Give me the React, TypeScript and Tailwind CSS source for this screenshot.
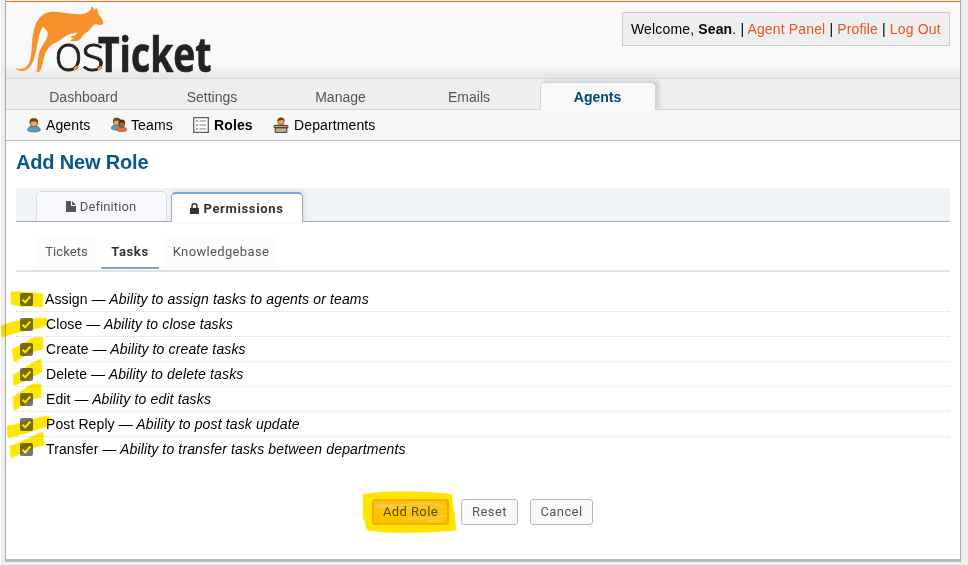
import React from "react";

function Logo() {
  return (
    <svg className="block h-[76px] w-[210px] overflow-visible" viewBox="8 2 210 76">
      <path
        fill="#f7902a"
        d="M15 68.300C20 70 26 69 29 63C33 54 30.500 43 34 30C36 20 42 13 50 12C57 11 62 13 70 13.500C77 14.500 84 15 88 12C90.500 10.500 91.500 9 91 6.500C93 7 94 8.500 94.500 10.500C95.500 9 95.300 7.500 96 7.500C97.700 9 97.500 12 98.500 14.500C101 17 103.500 20.500 103.300 23.500C102 26 98 24.500 95 24C91 27 90 31 83.500 34.500C82.500 37 80 40 77 41L71 41C70 39.500 72 39 74.500 38.500C70 38 70 36.500 72 36.300C76 36 76.500 33.500 77 32.500C71 33.500 67 35 65 36.500C59 42 52 43 48.500 48C43.500 54 44 60 41 69C39.500 72.500 38 73 36.700 72C38 63 37.500 57 40 50C42 45 49 38 47.500 32C46 29 44 28 43 26.500C38 33 38 45 35 55C33 65 28 71 21.500 71C18 70.500 16 69.500 15 68.300Z"
      />
      <g fill="#222" stroke="#222" className="font-['Lato',sans-serif] text-[53px] font-light">
        <text x="54.500" y="71.300" textLength="28" lengthAdjust="spacingAndGlyphs" strokeWidth=".8">o</text>
        <text x="81" y="71.300" textLength="24" lengthAdjust="spacingAndGlyphs" strokeWidth=".8">s</text>
      </g>
      <text x="98" y="71.700" textLength="113.500" lengthAdjust="spacingAndGlyphs" fill="#222" stroke="#222" strokeWidth=".7" className="font-['Open_Sans',sans-serif] text-[49px] font-bold">Ticket</text>
      <path d="M74 69.500L78 66.500M98 69.500L102 67" stroke="#f7902a" strokeWidth="3" />
    </svg>
  );
}

function Person({ x = 0, shirt = "#5b9bbd", skin = "#eba65c", hair = "#71431b", s = 1 }) {
  return (
    <g transform={`translate(${x} ${(1 - s) * 14}) scale(${s})`}>
      <path d="M.8 12.500C.8 9.500 3 8.500 5 8.300H9C12 8.700 13.500 10 13.500 12.500Q11 14 7 14Q3 14 .8 12.500Z" fill={shirt} stroke="#37657f" strokeWidth=".7" />
      <circle cx="7" cy="5" r="3.800" fill={skin} stroke={hair} strokeWidth=".7" />
      <path d="M3 5.500C2 1 5 0 7.500.300C11 .300 12 3 10.800 5.500L9.500 3.500L5 3.500Z" fill={hair} />
    </g>
  );
}

const icons: Record<string, React.ReactNode> = {
  Agents: <g transform="translate(.8 1)"><Person /></g>,
  Teams: (
    <>
      <g transform="translate(-.5 -.8)"><Person s={0.9} /></g>
      <g transform="translate(5.500 2.400) scale(.76 .88)">
        <Person shirt="#f06a28" skin="#9a643c" hair="#493021" />
      </g>
    </>
  ),
  Roles: (
    <>
      <path d="M.7 .7H15.300V15.300H.7Z" fill="#fff" stroke="#606060" strokeWidth="1.300" />
      <path d="M6.500 4H13M6.500 8H13M6.500 12H13" stroke="#aaa" strokeWidth="1.300" />
      <path d="M3 4H5M3 8H5M3 12H5" stroke="#aaa" strokeWidth="2" />
    </>
  ),
  Departments: (
    <g transform="translate(.5 0)">
      <path d="M3.500 8C3.500 6.500 5 6 7 6C9 6 11 6.500 11 8Z" fill="#f0a24f" />
      <circle cx="7.500" cy="4.200" r="3.200" fill="#eba65c" stroke="#71431b" strokeWidth=".7" />
      <path d="M4 4C3.500 -.7 11.500 -.7 11 4L9 2.700Z" fill="#713d14" />
      <path d="M.6 8.500H14.400V10.700H.6ZM1.700 10.700H13.300V15.400H1.700Z" fill="#c8aa8c" stroke="#493c32" />
    </g>
  ),
};

const subnav = [
  { name: "Agents", box: "w-[85px]" },
  { name: "Teams", box: "w-[82px]" },
  { name: "Roles", box: "w-[80px] gap-px font-bold" },
  { name: "Departments", box: "gap-px" },
];

const perms = [
  { name: "Assign", text: "Ability to assign tasks to agents or teams", mark: "M11 12C20 11.500 30 12 43 14L42.500 27C30 25 21 28 11 24Z", pad: "pl-[12px]" },
  { name: "Close", text: "Ability to close tasks", mark: "M1 21C12 16 28 13 46 13L48 16Q47 21 39 23C26 25 14 28 2 32Z", pad: "pl-[13px]" },
  { name: "Create", text: "Ability to create tasks", mark: "M12 19C21 16 28 10 33 8L42.500 7L43 19C31 21 25 26 14 32Z", pad: "pl-[13px]" },
  { name: "Delete", text: "Ability to delete tasks", mark: "M13 20C22 16 30 8 41 4L42 17C33 21 24 26 14 31Z", pad: "pl-[13px]" },
  { name: "Edit", text: "Ability to edit tasks", mark: "M13 17C20 13 27 6 33 4L41 4L41 17C31 18 23 25 14 31Z", pad: "pl-[13px]" },
  { name: "Post Reply", text: "Ability to post task update", mark: "M7 21C23 19 35 12 48 11L51 14Q50 19 45 22C33 26 20 30 8 33Z", pad: "pl-[13px]" },
  { name: "Transfer", text: "Ability to transfer tasks between departments", mark: "M10 16C21 13 31 6 43 2L44 15C33 17 24 22 11 28Z", pad: "pl-[13px]" },
];

export default function App() {
  return (
    <div className="h-[565px] w-[968px] overflow-hidden border-l border-white bg-[#eee] pl-1 font-['Liberation_Sans',Arial,sans-serif] text-[14px] leading-4 text-black">
      <div className="flex h-[562px] w-[956px] flex-col border-x border-b-[3px] border-x-[#aaa] border-b-[#bbb] bg-white">
        <header className="h-[79px] shrink-0 border-b border-[#d9d9d9] bg-[linear-gradient(#f8f8f8_83%,#e5e5e5)] pt-px">
          <div className="h-px bg-[#ee6b20]" />
          <div className="flex justify-between">
            <div className="pl-[2px]"><Logo /></div>
            <div className="mt-[10px] mr-[10px] flex h-[34px] w-[328px] items-center border border-[#ccc] bg-[#eee] pl-2 tracking-[.15px] whitespace-pre">
              <span>Welcome, <b>Sean</b>. | <span className="text-[#e65524]">Agent Panel</span> | <span className="text-[#e65524]">Profile</span> | <span className="text-[#e65524]">Log Out</span></span>
            </div>
          </div>
        </header>
        <nav className="flex h-[31px] shrink-0 border-b border-[#c5d9e8] bg-[#eee] pt-[10px] text-[#555]">
          <span className="ml-[13px] w-[129px] text-center">Dashboard</span>
          <span className="w-[128px] text-center">Settings</span>
          <span className="w-[129px] text-center">Manage</span>
          <span className="w-[128px] text-center">Emails</span>
          <span className="-mt-[7px] ml-[7px] h-[28px] w-[116px] rounded-t-[5px] border border-b-0 border-[#c5d9e8] bg-[#f8f8f8] pt-[6px] pr-px text-center font-bold text-[#00457c] shadow-[3px_-1px_4px_#ccc]">Agents</span>
        </nav>
        <div className="flex h-[31px] shrink-0 items-center border-b border-[#bebebe] bg-[#f7f7f7] pl-5 tracking-[.12px]">
          {subnav.map((item) => (
            <div key={item.name} className={`flex items-center ${item.box}`}>
              <svg viewBox="0 0 16 16" className="mr-1 h-4 w-4">{icons[item.name]}</svg>
              {item.name}
            </div>
          ))}
        </div>
        <main className="px-[10px] pt-[9px]">
          <h1 className="text-[20px] leading-6 font-bold tracking-[-.17px] text-[#0a568e]">Add New Role</h1>
          <div className="mt-[14px] flex h-[34px] items-end border-b border-[#aaa] bg-[#eef3f8] pl-5 font-['Roboto',sans-serif] text-[13px] tracking-[.1px] text-[#555]">
            <div className="flex h-[30px] w-[131px] items-center justify-center rounded-t-[5px] border border-b-0 border-[#ddd] bg-[#f7f9fc] pr-px">
              <svg className="mr-1 h-[11px] w-[10px]" viewBox="0 0 10 11"><path fill="#555" d="M0 0H5V5H10V11H0ZM6 0L10 4H6Z" /></svg>
              Definition
            </div>
            <div className="-mb-px ml-1 flex h-[30px] w-[132px] items-center justify-center rounded-t-[5px] border border-t-2 border-b-0 border-[#aaa] border-t-[#7da6d8] bg-white pt-px font-bold tracking-[.65px] text-[#333] shadow-[2px_-1px_4px_#ddd]">
              <svg className="mr-1 h-[11px] w-[9px]" viewBox="0 0 9 11"><path fill="none" stroke="#333" strokeWidth="1.500" d="M2 5V3Q2 .8 4.500 .8Q7 .8 7 3V5" /><path fill="#333" d="M0 5H9V11H0Z" /></svg>
              Permissions
            </div>
          </div>
          <div className="flex h-[50px] items-end border-b-2 border-[#e2e2e2] pl-5 font-['Roboto',sans-serif] text-[13px] tracking-[.1px] text-[#555]">
            <span className="mb-[3px] h-[29px] w-[61px] bg-[#fcfcfc] pt-[6px] text-center">Tickets</span>
            <span className="mb-px ml-1 h-[31px] w-[58px] border-b-2 border-[#7da6d8] pt-[6px] text-center font-bold tracking-[.6px] text-[#333]">Tasks</span>
            <span className="mb-[3px] ml-[5px] h-[29px] w-[114px] bg-[#fcfcfc] pt-[6px] text-center tracking-[.35px]">Knowledgebase</span>
          </div>
          <div className="mt-[15px]">
            {perms.map((perm) => (
              <div key={perm.name} className="relative flex h-[25px] items-center border-b border-dotted border-[#d8d8d8] pl-1 last:border-transparent">
                <svg className="h-[13px] w-[13px]" viewBox="0 0 13 13"><rect width="13" height="13" rx="2" fill="#767676" /><path d="M2.500 6.800L5.200 9.300L10.300 3.500" fill="none" stroke="white" strokeWidth="2" /></svg>
                <span className={perm.pad}><span className="tracking-[.1px]">{perm.name} —</span><i className="tracking-[.14px]"> {perm.text}</i></span>
                <svg className="pointer-events-none absolute -top-[7px] -left-[16px] h-[38px] w-[55px] mix-blend-multiply" viewBox="0 0 55 38"><path fill="#ffe600" stroke="#ffe600" strokeWidth=".6" strokeLinejoin="round" d={perm.mark} /></svg>
              </div>
            ))}
          </div>
          <div className="relative mt-[37px] flex pl-[356px] font-['Roboto',sans-serif] text-[13px] tracking-[.4px] text-[#555]">
            <button className="h-[26px] w-[77px] rounded-[3px] border-2 border-[#ffbc00] bg-[#ffdc20] text-[#555]">Add Role</button>
            <button className="ml-3 h-[26px] w-[57px] rounded-[3px] border border-[#b5b5b5] bg-[#fafafa]">Reset</button>
            <button className="ml-3 h-[26px] w-[63px] rounded-[3px] border border-[#b5b5b5] bg-[#fafafa]">Cancel</button>
            <svg className="pointer-events-none absolute -top-[9px] left-[344px] h-[44px] w-[98px] mix-blend-multiply" viewBox="0 0 98 44"><path fill="#ffe600" d="M3 4C32 0 63 1 92 4L93 16Q96 28 96 39Q96 41 92 41C64 43 35 44 9 41Q5 40 5 31L3 29Z" /></svg>
            <svg className="pointer-events-none absolute top-0 left-[356px] h-[26px] w-[77px] mix-blend-screen" viewBox="0 0 77 26"><path fill="none" stroke="#000068" strokeWidth="1.500" d="M3 6L21 7L39 5L62 5L72 8M3 8L28 9L61 8M32 20L60 19L73 17M55 22L70 21" /></svg>
          </div>
        </main>
      </div>
    </div>
  );
}
